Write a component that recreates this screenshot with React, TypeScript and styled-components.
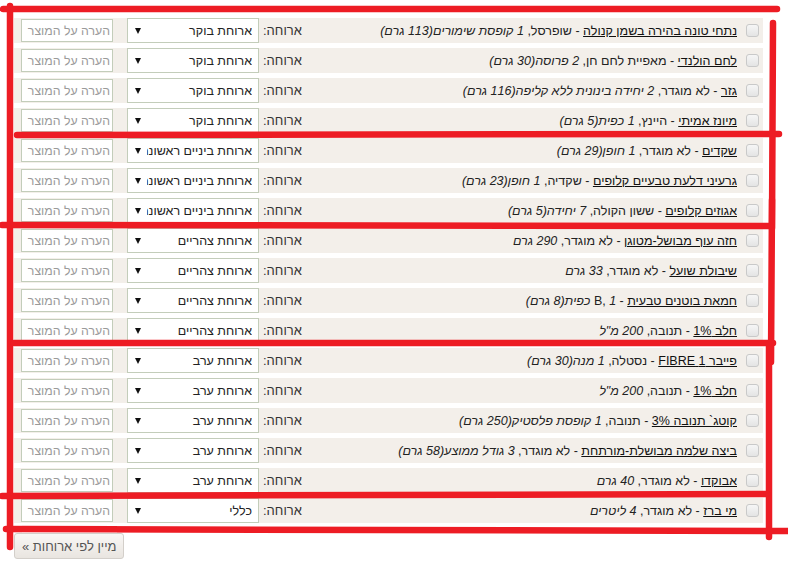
import React from 'react';
import styled, { createGlobalStyle } from 'styled-components';

const GlobalStyle = createGlobalStyle`
  body {
    margin: 0;
    background: #fff;
    font-family: "Liberation Sans", Arial, sans-serif;
  }
`;

type Item = {
  name: string;
  brand: string;
  amount: string;
  meal: string;
};

const items: Item[] = [
  { name: 'נתחי טונה בהירה בשמן קנולה', brand: 'שופרסל, ', amount: '1 קופסת שימורים(113 גרם)', meal: 'ארוחת בוקר' },
  { name: 'לחם הולנדי', brand: 'מאפיית לחם חן, ', amount: '2 פרוסה(30 גרם)', meal: 'ארוחת בוקר' },
  { name: 'גזר', brand: 'לא מוגדר, ', amount: '2 יחידה בינונית ללא קליפה(116 גרם)', meal: 'ארוחת בוקר' },
  { name: 'מיונז אמיתי', brand: 'היינץ, ', amount: '1 כפית(5 גרם)', meal: 'ארוחת בוקר' },
  { name: 'שקדים', brand: 'לא מוגדר, ', amount: '1 חופן(29 גרם)', meal: 'ארוחת ביניים ראשונה' },
  { name: 'גרעיני דלעת טבעיים קלופים', brand: 'שקדיה, ', amount: '1 חופן(23 גרם)', meal: 'ארוחת ביניים ראשונה' },
  { name: 'אגוזים קלופים', brand: 'ששון הקולה, ', amount: '7 יחידה(5 גרם)', meal: 'ארוחת ביניים ראשונה' },
  { name: 'חזה עוף מבושל-מטוגן', brand: 'לא מוגדר, ', amount: '290 גרם', meal: 'ארוחת צהריים' },
  { name: 'שיבולת שועל', brand: 'לא מוגדר, ', amount: '33 גרם', meal: 'ארוחת צהריים' },
  { name: 'חמאת בוטנים טבעית', brand: 'B, ', amount: '1 כפית(8 גרם)', meal: 'ארוחת צהריים' },
  { name: 'חלב 1%', brand: 'תנובה, ', amount: '200 מ"ל', meal: 'ארוחת צהריים' },
  { name: 'פייבר 1 FIBRE', brand: 'נסטלה, ', amount: '1 מנה(30 גרם)', meal: 'ארוחת ערב' },
  { name: 'חלב 1%', brand: 'תנובה, ', amount: '200 מ"ל', meal: 'ארוחת ערב' },
  { name: 'קוטג` תנובה 3%', brand: 'תנובה, ', amount: '1 קופסת פלסטיק(250 גרם)', meal: 'ארוחת ערב' },
  { name: 'ביצה שלמה מבושלת-מורתחת', brand: 'לא מוגדר, ', amount: '3 גודל ממוצע(58 גרם)', meal: 'ארוחת ערב' },
  { name: 'אבוקדו', brand: 'לא מוגדר, ', amount: '40 גרם', meal: 'ארוחת ערב' },
  { name: 'מי ברז', brand: 'לא מוגדר, ', amount: '4 ליטרים', meal: 'כללי' },
];

const Page = styled.div`
  position: relative;
  width: 788px;
  height: 574px;
  box-sizing: border-box;
  padding: 18px 0 0 14px;
`;

const List = styled.div`
  width: 749px;
  display: flex;
  flex-direction: column;
  gap: 5px;
  direction: rtl;
`;

const Row = styled.div`
  display: flex;
  align-items: center;
  height: 25px;
  padding: 0 4px 0 7px;
  background: #f3efea;
  font-size: 13px;
  color: #222;
`;

const Checkbox = styled.span`
  flex: none;
  width: 11px;
  height: 11px;
  margin-left: 9px;
  border: 1px solid #c9c9c9;
  border-radius: 3px;
  background: linear-gradient(#f6f6f6, #e4e4e4);
`;

const Description = styled.div`
  flex: 1;
  white-space: nowrap;
  overflow: hidden;
  font-size: 12.5px;
`;

const ProductName = styled.a`
  color: #111;
  text-decoration: underline;
`;

const Amount = styled.i`
  font-style: italic;
`;

const MealLabel = styled.span`
  flex: none;
  margin-left: 4px;
  color: #333;
`;

const SelectBox = styled.div`
  flex: none;
  display: flex;
  align-items: center;
  width: 132px;
  height: 25px;
  box-sizing: border-box;
  padding: 0 6px 0 7px;
  border: 1px solid #c3cdba;
  background: #fff;
`;

const SelectText = styled.span`
  flex: 1;
  overflow: hidden;
  white-space: nowrap;
  font-size: 12.5px;
  color: #222;
`;

const Arrow = styled.svg`
  flex: none;
  margin-right: 6px;
`;

const NoteInput = styled.input`
  flex: none;
  width: 92px;
  height: 23px;
  box-sizing: border-box;
  margin-right: 14px;
  padding: 0 2px;
  border: 1px solid #c3cdba;
  background: #fff;
  direction: rtl;
  font-family: inherit;
  font-size: 12.3px;
  &::placeholder {
    color: #9a9a9a;
  }
`;

const SortButton = styled.button`
  display: block;
  margin-top: 10px;
  height: 26px;
  padding: 0 7px;
  direction: rtl;
  border: 1px solid #d3cfca;
  border-radius: 3px;
  background: linear-gradient(#f9f7f5, #e9e5e0);
  color: #555;
  font-family: inherit;
  font-size: 13px;
`;

const Marker = styled.svg`
  position: absolute;
  left: 0;
  top: 0;
  pointer-events: none;
`;

// freehand red strokes that group the list by meal
const strokes = [
  'M3 9 L777 9',
  'M10 6 L10 547',
  'M773 23 L772 228',
  'M772 200 L771 362',
  'M769 345 L769 537',
  'M17 135 L779 134',
  'M2 225 L770 226',
  'M14 343 L773 343',
  'M2 496 L767 494',
  'M6 529 L788 531',
];

const App: React.FC = () => (
  <>
    <GlobalStyle />
    <Page>
      <List>
        {items.map((item, i) => (
          <Row key={i}>
            <Checkbox />
            <Description>
              <ProductName>{item.name}</ProductName> - {item.brand}
              <Amount>{item.amount}</Amount>
            </Description>
            <MealLabel>ארוחה:</MealLabel>
            <SelectBox>
              <SelectText>{item.meal}</SelectText>
              <Arrow width="6" height="6" viewBox="0 0 6 6">
                <polygon points="0,0 6,0 3,6" fill="#111" />
              </Arrow>
            </SelectBox>
            <NoteInput placeholder="הערה על המוצר" />
          </Row>
        ))}
      </List>
      <SortButton>מיין לפי ארוחות »</SortButton>
      <Marker width="788" height="574" viewBox="0 0 788 574">
        {strokes.map((d) => (
          <path key={d} d={d} stroke="#ed1c24" strokeWidth="6.5" strokeLinecap="round" fill="none" />
        ))}
      </Marker>
    </Page>
  </>
);

export default App;
